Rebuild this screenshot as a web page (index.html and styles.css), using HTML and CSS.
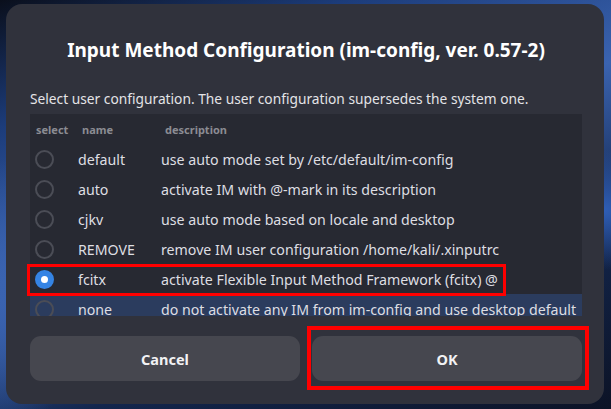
FILE: index.html
```html
<!DOCTYPE html>
<html>
<head>
<meta charset="utf-8">
<link rel="stylesheet" href="styles.css">
</head>
<body>
<div class="desk">
  <div class="dialog">
    <h1 class="title">Input Method Configuration (im-config, ver. 0.57-2)</h1>
    <p class="intro">Select user configuration. The user configuration supersedes the system one.</p>
    <div class="list">
      <div class="row head">
        <span class="c-sel">select</span>
        <span class="c-name">name</span>
        <span class="c-desc">description</span>
      </div>
      <div class="row">
        <span class="c-sel"><span class="radio"></span></span>
        <span class="c-name">default</span>
        <span class="c-desc">use auto mode set by /etc/default/im-config</span>
      </div>
      <div class="row">
        <span class="c-sel"><span class="radio"></span></span>
        <span class="c-name">auto</span>
        <span class="c-desc">activate IM with @-mark in its description</span>
      </div>
      <div class="row">
        <span class="c-sel"><span class="radio"></span></span>
        <span class="c-name">cjkv</span>
        <span class="c-desc">use auto mode based on locale and desktop</span>
      </div>
      <div class="row">
        <span class="c-sel"><span class="radio"></span></span>
        <span class="c-name">REMOVE</span>
        <span class="c-desc">remove IM user configuration /home/kali/.xinputrc</span>
      </div>
      <div class="row">
        <span class="c-sel"><span class="radio on"></span></span>
        <span class="c-name">fcitx</span>
        <span class="c-desc">activate Flexible Input Method Framework (fcitx) @</span>
      </div>
      <div class="row hover">
        <span class="c-sel"><span class="radio"></span></span>
        <span class="c-name">none</span>
        <span class="c-desc">do not activate any IM from im-config and use desktop default</span>
      </div>
    </div>
    <div class="buttons">
      <button class="btn">Cancel</button>
      <button class="btn">OK</button>
    </div>
    <div class="mark mark-row"></div>
    <div class="mark mark-ok"></div>
  </div>
</div>
</body>
</html>
```

FILE: styles.css
```css
html, body {
  margin: 0;
  padding: 0;
  width: 611px;
  height: 409px;
  overflow: hidden;
}
.desk {
  width: 611px;
  height: 409px;
  padding: 4px 7px 5px 6px;
  box-sizing: border-box;
  background:
    radial-gradient(ellipse 120px 60px at 600px 210px, #2f5fb8 0%, rgba(47,95,184,0) 100%),
    radial-gradient(ellipse 80px 140px at 0px 300px, #3a63b0 0%, rgba(58,99,176,0) 100%),
    linear-gradient(160deg, #0a0f1c 0%, #1c3c7a 20%, #3a63b0 45%, #13264d 70%, #0c1326 100%);
}
.dialog {
  position: relative;
  width: 598px;
  height: 400px;
  box-sizing: border-box;
  background: #30323c;
  border-radius: 16px;
  padding: 0 22px 23px 24px;
  display: flex;
  flex-direction: column;
  font-family: "Noto Sans", "DejaVu Sans", sans-serif;
  color: #e9e9ec;
}
.title {
  margin: 0;
  height: 78px;
  display: flex;
  align-items: center;
  justify-content: center;
  padding-top: 14px;
  box-sizing: border-box;
  font-size: 19px;
  font-weight: 700;
  color: #ffffff;
  white-space: nowrap;
}
.intro {
  margin: 0;
  height: 32px;
  display: flex;
  align-items: center;
  font-size: 13.75px;
  color: #e4e4e7;
  white-space: nowrap;
}
.list {
  height: 202px;
  overflow: hidden;
  background: #272932;
  flex: none;
}
.row {
  height: 30px;
  display: grid;
  grid-template-columns: 48px 83px 1fr;
  align-items: center;
  font-size: 14.2px;
  color: #dedee2;
}
.row.hover {
  background: #2b3c5e;
}
.row.head {
  font-size: 11px;
  font-weight: 700;
  color: #8b8c93;
}
.head .c-sel { padding-left: 6px; }
.head .c-name { padding-left: 4px; }
.head .c-desc { padding-left: 4px; }
.c-sel {
  display: flex;
  align-items: center;
  padding-left: 5px;
}
.radio {
  width: 19px;
  height: 19px;
  box-sizing: border-box;
  border-radius: 50%;
  border: 2px solid #4b4d56;
  display: flex;
  align-items: center;
  justify-content: center;
}
.radio.on {
  background: #3584e4;
  border-color: #3584e4;
}
.radio.on::after {
  content: "";
  width: 7px;
  height: 7px;
  border-radius: 50%;
  background: #ffffff;
}
.c-name, .c-desc {
  white-space: nowrap;
}
.buttons {
  margin-top: 20px;
  display: grid;
  grid-template-columns: 1fr 1fr;
  gap: 12px;
}
.btn {
  height: 45px;
  border: none;
  border-radius: 11px;
  background: #46474f;
  color: #f2f2f4;
  font-family: "Noto Sans", "DejaVu Sans", sans-serif;
  font-size: 14.5px;
  font-weight: 700;
}
.mark {
  position: absolute;
  border: 3px solid #ff0000;
  box-sizing: border-box;
  pointer-events: none;
}
.mark-row {
  left: 21px;
  top: 260px;
  width: 479px;
  height: 32px;
}
.mark-ok {
  left: 301px;
  top: 322px;
  width: 282px;
  height: 64px;
  border-width: 4px;
}
```
